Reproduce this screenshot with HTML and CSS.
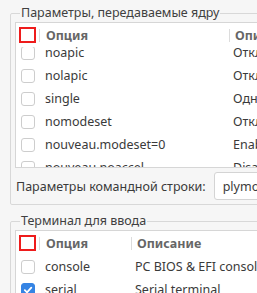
FILE: index.html
```html
<!DOCTYPE html>
<html>
<head>
    <title>Параметры загрузки</title>
    <link rel="stylesheet" href="styles.css">
</head>
<body>
    <div class="page">
        <fieldset class="group">
            <legend>Параметры, передаваемые ядру</legend>
            <div class="list">
                <div class="head">
                    <div class="cell-check"><span class="box marked"></span></div>
                    <div class="cell-name wide">Опция</div>
                    <div class="cell-desc">Описание</div>
                </div>
                <div class="rows kernel">
                    <div class="rows-inner">
                        <div class="row"><div class="cell-check"><span class="box"></span></div><div class="cell-name wide">noapic</div><div class="cell-desc">Отключить APIC</div></div>
                        <div class="row"><div class="cell-check"><span class="box"></span></div><div class="cell-name wide">nolapic</div><div class="cell-desc">Отключить локальный APIC</div></div>
                        <div class="row"><div class="cell-check"><span class="box"></span></div><div class="cell-name wide">single</div><div class="cell-desc">Однопользовательский режим</div></div>
                        <div class="row"><div class="cell-check"><span class="box"></span></div><div class="cell-name wide">nomodeset</div><div class="cell-desc">Отключить KMS</div></div>
                        <div class="row"><div class="cell-check"><span class="box"></span></div><div class="cell-name wide">nouveau.modeset=0</div><div class="cell-desc">Enable nouveau</div></div>
                        <div class="row"><div class="cell-check"><span class="box"></span></div><div class="cell-name wide">nouveau.noaccel</div><div class="cell-desc">Disable acceleration</div></div>
                    </div>
                </div>
            </div>
            <div class="cmdline">
                <label for="cmd">Параметры командной строки:</label>
                <input type="text" id="cmd" value="plymouth.enable=0 quiet splash">
            </div>
        </fieldset>

        <fieldset class="group">
            <legend>Терминал для ввода</legend>
            <div class="list">
                <div class="head">
                    <div class="cell-check"><span class="box marked"></span></div>
                    <div class="cell-name">Опция</div>
                    <div class="cell-desc">Описание</div>
                </div>
                <div class="rows">
                    <div class="row"><div class="cell-check"><span class="box"></span></div><div class="cell-name">console</div><div class="cell-desc">PC BIOS &amp; EFI console</div></div>
                    <div class="row"><div class="cell-check"><span class="box checked"><svg width="10" height="10" viewBox="0 0 10 10"><path d="M1.8 5.2 L4 7.3 L8.3 2.6" fill="none" stroke="#fff" stroke-width="1.8" stroke-linecap="round" stroke-linejoin="round"/></svg></span></div><div class="cell-name">serial</div><div class="cell-desc">Serial terminal</div></div>
                </div>
            </div>
        </fieldset>
    </div>
</body>
</html>
```

FILE: styles.css
```css
html, body {
    overflow: hidden;
}
body {
    margin: 0;
    background-color: #f6f6f6;
    font-family: "Noto Sans", sans-serif;
    font-size: 12.5px;
    color: #3a3a3a;
}
.page {
    width: 520px;
    padding: 4px 0 0 10px;
}
.group {
    margin: 0 0 7px 0;
    padding: 0 4px 4px 4px;
    border: 1px solid #d8d8d8;
    border-radius: 2px;
}
.group legend {
    margin-left: 5px;
    padding: 0 1px;
    line-height: 18px;
    color: #404040;
}
.list {
    background-color: #ffffff;
    border: 1px solid #d6d6d6;
}
.head, .row {
    display: flex;
    align-items: center;
}
.head {
    height: 24px;
    font-weight: bold;
    color: #666666;
}
.row {
    height: 23px;
}
.cell-check {
    width: 23px;
    display: flex;
    justify-content: center;
    flex: none;
}
.cell-name {
    width: 85px;
    padding-left: 6px;
    flex: none;
    white-space: nowrap;
    overflow: hidden;
}
.cell-name.wide {
    width: 183px;
}
.cell-desc {
    white-space: nowrap;
    padding-left: 5px;
}
.head .cell-name, .head .cell-desc {
    border-left: 1px solid #dcdcdc;
    line-height: 13px;
}
.box {
    display: flex;
    align-items: center;
    justify-content: center;
    width: 12px;
    height: 12px;
    border: 1px solid #cdcdcd;
    border-radius: 3px;
    background-color: #ffffff;
}
.box.marked {
    width: 13px;
    height: 12px;
    border: 2px solid #ee1c1c;
    border-radius: 0;
}
.box.checked {
    background-color: #3584e4;
    border-color: #3584e4;
}
.rows.kernel {
    height: 120px;
    overflow: hidden;
}
.rows.kernel .rows-inner {
    margin-top: -6px;
}
.cmdline {
    display: flex;
    align-items: center;
    gap: 8px;
    margin-top: 4px;
    padding-left: 1px;
}
.cmdline label {
    white-space: nowrap;
}
.cmdline input {
    width: 220px;
    height: 28px;
    box-sizing: border-box;
    padding: 0 8px;
    border: 1px solid #d4d4d4;
    border-radius: 3px;
    font-family: "Noto Sans", sans-serif;
    font-size: 12.5px;
    color: #3a3a3a;
    background-color: #ffffff;
}
```
